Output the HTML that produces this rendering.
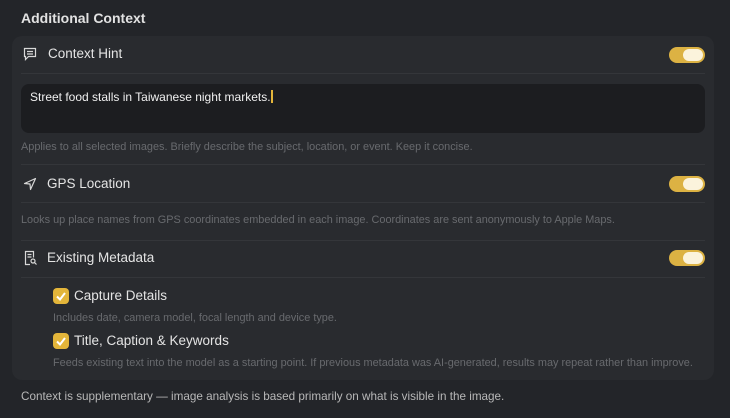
<!DOCTYPE html>
<html><head><style>
body{margin:0;width:730px;height:418px;background:#232529;font-family:"Liberation Sans",sans-serif;overflow:hidden;position:relative;color:#e6e6e6}
.a{position:absolute;white-space:nowrap}
.card{position:absolute;left:12px;top:36px;width:702px;height:344px;background:#292b2f;border-radius:10px}
.div{position:absolute;left:21px;width:684px;height:1px;background:#34363a}
.lbl{font-size:13.5px;color:#e4e4e4}
.help{font-size:10.9px;color:#686a6e}
.tog{position:absolute;left:669px;width:36px;height:16px;border-radius:8px;background:#dcb243}
.tog:after{content:"";position:absolute;right:2px;top:2px;width:20px;height:12px;border-radius:6px;background:#fbf3dc}
.cb{position:absolute;left:53px;width:16px;height:16px;border-radius:4px;background:#e3b53a}
</style></head><body>
<div class="a" style="left:21px;top:10px;font-size:14px;font-weight:bold;color:#e2e2e2">Additional Context</div>
<div class="card"></div>
<svg class="a" style="left:22px;top:46px" width="16" height="16" viewBox="0 0 16 16" fill="none" stroke="#d8d8d8" stroke-width="1.2"><path d="M2.5 2.5h11v8h-7l-3 3v-3h-1z"/><path d="M5 5.5h6M5 8h6"/></svg>
<div class="a lbl" style="left:48px;top:46px">Context Hint</div>
<div class="tog" style="top:47px"></div>
<div class="div" style="top:73px"></div>
<div class="a" style="left:21px;top:84px;width:684px;height:49px;background:#1c1d20;border-radius:8px"></div>
<div class="a" style="left:30px;top:90px;font-size:12px;color:#f0f0f0">Street food stalls in Taiwanese night markets.<span style="display:inline-block;width:2px;height:13px;background:#e3b53a;vertical-align:-2px"></span></div>
<div class="a help" style="left:21px;top:141px">Applies to all selected images. Briefly describe the subject, location, or event. Keep it concise.</div>
<div class="div" style="top:164px"></div>
<svg class="a" style="left:22px;top:176px" width="16" height="16" viewBox="0 0 16 16" fill="none" stroke="#d8d8d8" stroke-width="1.2" stroke-linejoin="round"><path d="M13.5 2.5L2.5 7.5l5.5 .5 .5 5.5z"/></svg>
<div class="a lbl" style="left:47px;top:176px">GPS Location</div>
<div class="tog" style="top:176px"></div>
<div class="div" style="top:202px"></div>
<div class="a help" style="left:21px;top:214px">Looks up place names from GPS coordinates embedded in each image. Coordinates are sent anonymously to Apple Maps.</div>
<div class="div" style="top:240px"></div>
<svg class="a" style="left:22px;top:250px" width="16" height="16" viewBox="0 0 16 16" fill="none" stroke="#d8d8d8" stroke-width="1.2"><path d="M8 14.5H3.5v-13h8v6"/><path d="M5.5 4.5h4M5.5 7h4"/><circle cx="11" cy="11" r="2"/><path d="M12.5 12.5l2 2"/></svg>
<div class="a lbl" style="left:47px;top:250px">Existing Metadata</div>
<div class="tog" style="top:250px"></div>
<div class="div" style="top:277px"></div>
<div class="cb" style="top:288px"></div>
<svg class="a" style="left:53px;top:288px" width="16" height="16"><path d="M4 8.5l3 3 5-6.5" fill="none" stroke="#fff" stroke-width="2"/></svg>
<div class="a lbl" style="left:74px;top:288px">Capture Details</div>
<div class="a help" style="left:53px;top:312px">Includes date, camera model, focal length and device type.</div>
<div class="cb" style="top:333px"></div>
<svg class="a" style="left:53px;top:333px" width="16" height="16"><path d="M4 8.5l3 3 5-6.5" fill="none" stroke="#fff" stroke-width="2"/></svg>
<div class="a lbl" style="left:74px;top:333px">Title, Caption &amp; Keywords</div>
<div class="a help" style="left:53px;top:357px">Feeds existing text into the model as a starting point. If previous metadata was AI-generated, results may repeat rather than improve.</div>
<div class="a" style="left:21px;top:390px;font-size:11.7px;color:#b8b8b8">Context is supplementary — image analysis is based primarily on what is visible in the image.</div>
</body></html>
